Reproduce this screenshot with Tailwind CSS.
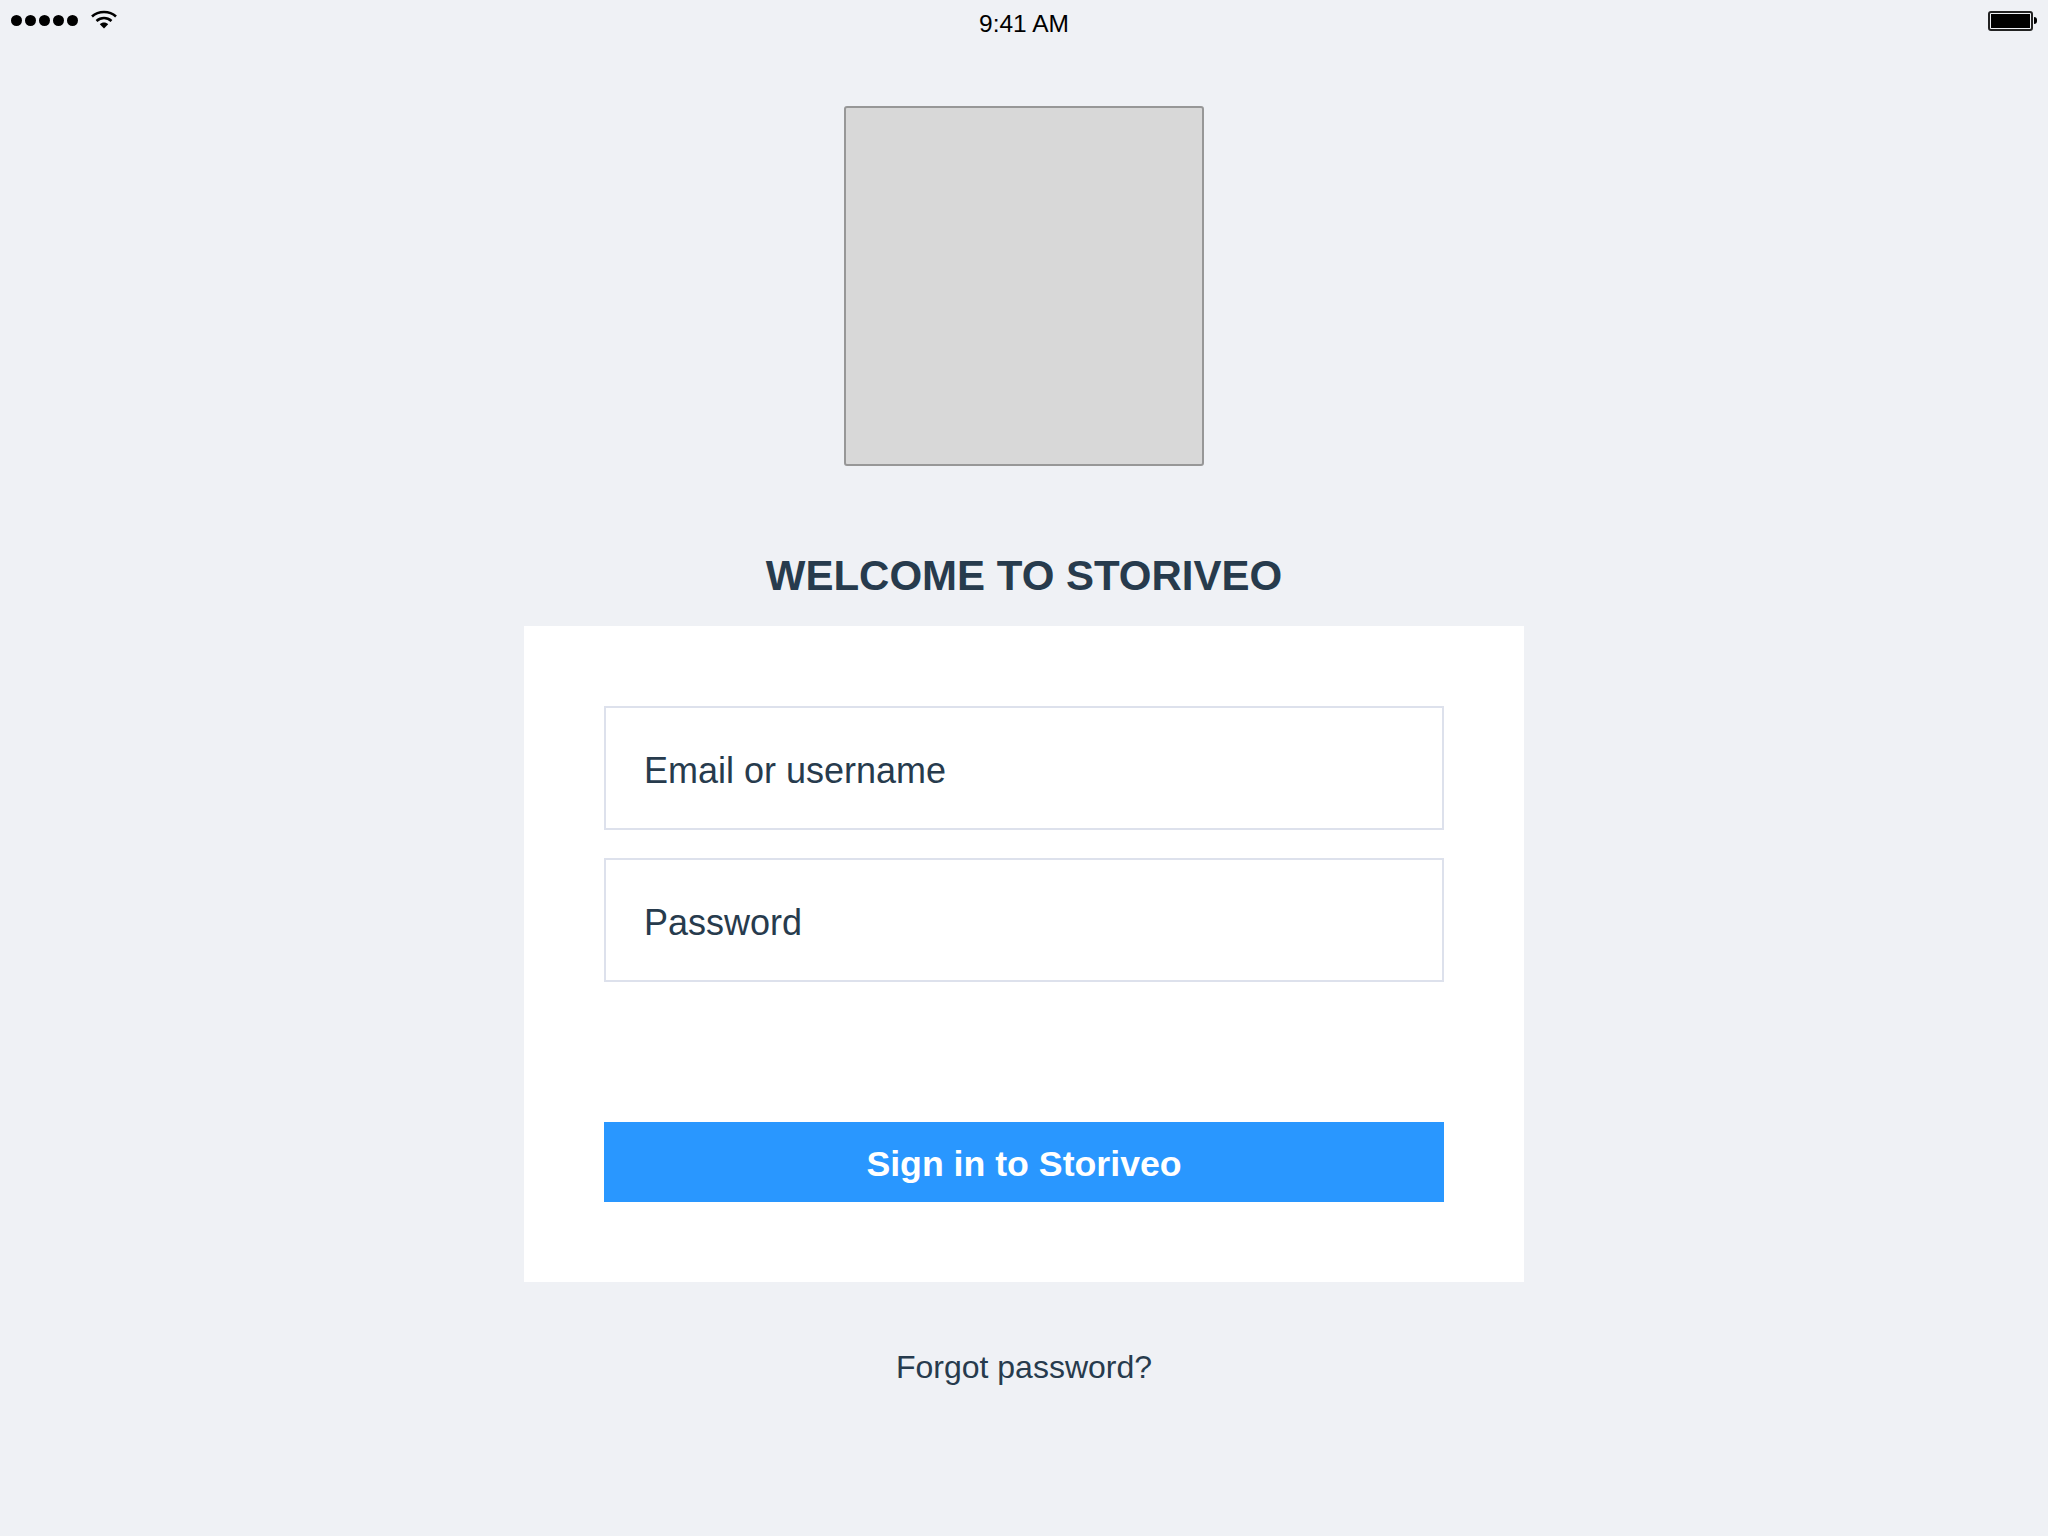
<!DOCTYPE html>
<html lang="en">

<head>
    <meta charset="UTF-8">
    <meta name="viewport" content="width=device-width, initial-scale=1.0">
    <title>Storiveo</title>
    <script src="https://cdn.jsdelivr.net/npm/@tailwindcss/browser@4"></script>
</head>

<body class="bg-[#eff1f5] font-['Liberation_Sans',sans-serif] text-[#273b4d]">
    <div class="w-[2048px] h-[1536px] flex flex-col items-center">
        <!-- status bar -->
        <div class="w-full h-[46px] px-[11px] grid grid-cols-3 text-black">
            <div class="flex items-center h-[40px] gap-[13px]">
                <div class="flex gap-[3px]">
                    <span class="w-[11px] h-[11px] rounded-full bg-black"></span>
                    <span class="w-[11px] h-[11px] rounded-full bg-black"></span>
                    <span class="w-[11px] h-[11px] rounded-full bg-black"></span>
                    <span class="w-[11px] h-[11px] rounded-full bg-black"></span>
                    <span class="w-[11px] h-[11px] rounded-full bg-black"></span>
                </div>
                <svg width="26" height="20" viewBox="0 0 26 20" fill="none">
                    <path d="M1 6.5C7.5 0.5 18.5 0.5 25 6.5" stroke="#000" stroke-width="2.6" />
                    <path d="M5.5 11C10 7 16 7 20.5 11" stroke="#000" stroke-width="2.6" />
                    <path d="M8.8 14.2L13 18.6L17.2 14.2C15 12 11 12 8.8 14.2Z" fill="#000" />
                </svg>
            </div>
            <div class="text-[24.5px] leading-[47px] text-center">9:41 AM</div>
            <div class="flex justify-end items-center h-[41px] gap-px">
                <div class="w-[45px] h-[20px] border-2 border-[#222] rounded-[3px] p-px">
                    <div class="w-full h-full bg-black"></div>
                </div>
                <div class="w-[3px] h-[7px] bg-black rounded-r-sm"></div>
            </div>
        </div>

        <!-- logo placeholder -->
        <div class="w-[360px] h-[360px] mt-[60px] bg-[#d8d8d8] border-2 border-[#979797] rounded-[3px]"></div>

        <h1 class="mt-[85px] text-[42px] leading-[50px] font-bold">WELCOME TO STORIVEO</h1>

        <!-- login card -->
        <div class="w-[1000px] h-[656px] mt-[25px] bg-white p-[80px] flex flex-col">
            <div class="h-[124px] border-2 border-[#dde1ec] pl-[38px] pt-[6px] flex items-center text-[36px]">Email or username</div>
            <div class="h-[124px] mt-[28px] border-2 border-[#dde1ec] pl-[38px] pt-[6px] flex items-center text-[36px]">Password</div>
            <button class="h-[80px] mt-[140px] pt-[5px] bg-[#2997ff] text-white text-[35.7px] font-bold">Sign in to Storiveo</button>
        </div>

        <a class="mt-[65px] text-[32px] leading-[40px]">Forgot password?</a>
    </div>
</body>

</html>
